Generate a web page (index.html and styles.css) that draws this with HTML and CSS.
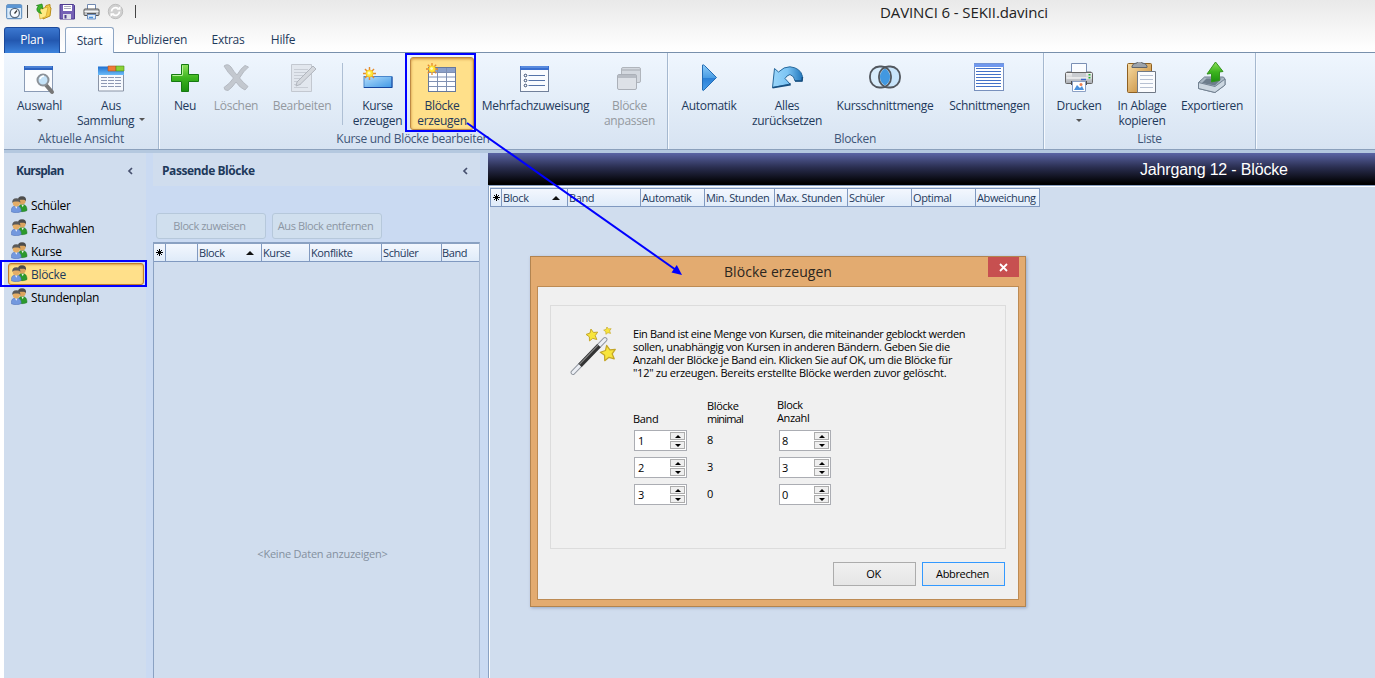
FILE: index.html
```html
<!DOCTYPE html>
<html lang="de">
<head>
<meta charset="utf-8">
<title>DAVINCI 6 - SEKII.davinci</title>
<link rel="stylesheet" href="styles.css">
</head>
<body>
<svg class="defs" width="0" height="0">
  <defs>
    <linearGradient id="gGreen" x1="0" y1="0" x2="0" y2="1"><stop offset="0" stop-color="#8fe05a"/><stop offset=".5" stop-color="#3cb41e"/><stop offset="1" stop-color="#1c9010"/></linearGradient>
    <linearGradient id="gBlue" x1="0" y1="0" x2="0" y2="1"><stop offset="0" stop-color="#8ccbf8"/><stop offset=".5" stop-color="#4a9de4"/><stop offset=".52" stop-color="#2a7fd6"/><stop offset="1" stop-color="#4aa0ea"/></linearGradient>
    <linearGradient id="gBar" x1="0" y1="0" x2="1" y2="1"><stop offset="0" stop-color="#b4defc"/><stop offset="1" stop-color="#3f98e6"/></linearGradient>
    <linearGradient id="gArc" x1="0" y1="0" x2="1" y2="0"><stop offset="0" stop-color="#9ad6fa"/><stop offset=".5" stop-color="#7cc4f4"/><stop offset="1" stop-color="#2277bc"/></linearGradient>
    <linearGradient id="gGrey" x1="0" y1="0" x2="0" y2="1"><stop offset="0" stop-color="#f4f4f4"/><stop offset="1" stop-color="#a8acb2"/></linearGradient>
    <linearGradient id="gClip" x1="0" y1="0" x2="1" y2="1"><stop offset="0" stop-color="#f8dca4"/><stop offset="1" stop-color="#bf812c"/></linearGradient>
    <linearGradient id="gTab" x1="0" y1="0" x2="0" y2="1"><stop offset="0" stop-color="#1e6fd0"/><stop offset="1" stop-color="#6cbcf8"/></linearGradient>
    <symbol id="spark" viewBox="0 0 12 12"><path d="M6 0v12M0 6h12M1.800 1.800l8.400 8.400M10.200 1.800l-8.400 8.400" stroke="#e58a2c" stroke-width="1.300"/><circle cx="6" cy="6" r="3.300" fill="#ffe83a" stroke="#f2bd1c" stroke-width=".6"/><circle cx="5.600" cy="5.600" r="1.400" fill="#fffcc0"/></symbol>
    <symbol id="people" viewBox="0 0 17 17">
      <path d="M7.500 15c0-5 1-6.500 3.500-6.500 3 0 5 1.500 5 6-2 1.300-5.700 1.600-8.500.5z" fill="#2c9a2c" stroke="#17701c" stroke-width=".5"/>
      <path d="M10.500 8.700l1.200 2.500 1.200-2.500z" fill="#e8f4e8"/>
      <circle cx="11" cy="4.800" r="3.700" fill="#dba45f"/>
      <path d="M7 5.300C6.500 2 8 .3 11 .3s4.500 1.700 4 5c-.6-1.500-1.500-1.500-4-1.500-2 0-3.300.3-4 1.500z" fill="#4c4c4c"/>
      <path d="M.4 15.800C.2 11.500 1.500 10 5 10s5.300 1.500 5.200 5.500c-2.500 1.500-7 1.500-9.800.3z" fill="#7398de" stroke="#496cb4" stroke-width=".5"/>
      <path d="M4 10.200l1.300 2.500 1.200-2.500z" fill="#eef2fb"/>
      <circle cx="5.300" cy="6.800" r="3.600" fill="#e4ad66"/>
      <path d="M1.300 7C.9 3.700 2.500 2.200 5.300 2.200s4.400 1.500 4 4.800c-.6-1.400-1.500-1.600-4-1.600-2.200 0-3.300.3-4 1.600z" fill="#5a5a5a"/>
    </symbol>
    <symbol id="star" viewBox="0 0 20 20"><path d="M8.500 1.500l3.600 4.900 6-.5-3.500 5 2.300 5.600-5.800-1.700-4.700 3.700-.2-6L1.500 9.200l5.700-2z" fill="#f8e53c" stroke="#c4a628" stroke-width="1.400" stroke-linejoin="round"/></symbol>
    <symbol id="mark" viewBox="0 0 9 9"><path d="M4.500 1v7M1 4.500h7M2 2l5 5M7 2L2 7" stroke="#000" stroke-width="1"/><circle cx="4.500" cy="4.500" r="1.500" fill="#000"/></symbol>
    <symbol id="printer" viewBox="0 0 34 34">
      <path d="M9.500 3.500h15v11h-15z" fill="#fafcff" stroke="#7a8fb4"/>
      <path d="M5 11.500h4.500V14h15v-2.500H29l2 3H3z" fill="#7b7b7b"/>
      <rect x="3.500" y="12.500" width="27" height="11" rx="1" fill="url(#gGrey)" stroke="#666"/>
      <path d="M10 13h14v4H10z" fill="#c9ccd0"/><path d="M4.500 18h25" stroke="#fff"/>
      <path d="M9 21h16v4H9z" fill="#4c4c4c"/>
      <path d="M10.500 21.500h13v10h-13z" fill="#fff" stroke="#8ba0c4"/><path d="M12 30l3-5 3 3 2-2 2 4z" fill="#4a90dc"/><circle cx="19" cy="24.500" r="1.500" fill="#f08050"/>
      <path d="M19 19.500h5" stroke="#3c66cc" stroke-width="1.500"/><path d="M27.500 14v1.500M27.500 17v1.500" stroke="#20b030" stroke-width="2"/>
    </symbol>
  </defs>
</svg>

<header class="titlebar">
  <div class="quick">
    <svg width="17" height="17" viewBox="0 0 17 17"><rect x=".7" y="1.700" width="15" height="14" rx="1" fill="#d9ebfb" stroke="#5083b8"/><path d="M1 2h14.500v3H1z" fill="#5c96d4"/><circle cx="8.800" cy="10" r="4.600" fill="#f7fbff" stroke="#5b6c80" stroke-width="1.300"/><path d="M8.500 10.500L11 7.500" stroke="#333" stroke-width="1.200"/></svg>
    <span class="bar"></span>
    <svg width="17" height="17" viewBox="0 0 17 17"><path d="M6 6l4-1 1-2.500 4-1V4l1 1-1 8-7 3z" fill="#f5cc48" stroke="#b98e1a"/><path d="M3.500 6.500L13 4l-2 9.500L5 16z" fill="#ffea84" stroke="#d2a52a" stroke-width=".7"/><path d="M6.500 10.500C1 9.500 1 5 3.500 3.500L1.500 2.500 7 1 8 6 6 4.800c-1.500 1.200-1.500 3.500.5 5.700z" fill="#3db52b" stroke="#1d7b16" stroke-width=".7"/></svg>
    <svg class="q3" width="17" height="17" viewBox="0 0 17 17"><path d="M1 1.500h13.500l1 1V16H1z" fill="#7561b5" stroke="#4f3d90"/><path d="M4 2h9v6H4z" fill="#fff"/><path d="M5 3.500h7M5 5.500h7" stroke="#aab"/><path d="M4 11h8v5H4z" fill="#dedee8"/><path d="M5.500 12h2v3.500h-2z" fill="#4f3d90"/></svg>
    <svg class="q4" width="17" height="17" viewBox="0 0 17 17"><path d="M4.500 1.500h8v5h-8z" fill="#fff" stroke="#7088b0"/><rect x="1" y="6" width="15" height="6.500" rx="1" fill="#c2c4c8" stroke="#555"/><path d="M1.500 8.500h14" stroke="#f4f4f4"/><path d="M4 11h9" stroke="#333" stroke-width="1.500"/><path d="M4.500 11.500h8v4.500h-8z" fill="#dceaf9" stroke="#6d8ec0"/><path d="M6 14.500h4" stroke="#4a90dc" stroke-width="1.500"/></svg>
    <svg class="q5" width="17" height="17" viewBox="0 0 17 17"><circle cx="8.500" cy="8.500" r="7.200" fill="#d0d0d0" stroke="#bdbdbd"/><path d="M4.500 8.500a4 4 0 016.500-3M12.500 8.500a4 4 0 01-6.500 3" fill="none" stroke="#fff" stroke-width="1.800"/><path d="M9.500 6.800h4V3zM7.500 10.200h-4V14z" fill="#fff"/></svg>
    <span class="bar last"></span>
  </div>
  <h1>DAVINCI 6 - SEKII.davinci</h1>
  <nav class="tabs">
    <a class="tab plan">Plan</a><a class="tab start">Start</a><a class="tab pub">Publizieren</a><a class="tab ext">Extras</a><a class="tab help">Hilfe</a>
  </nav>
</header>

<section class="ribbon">
  <div class="group g1">
    <div class="tools">
      <div class="tool w65"><svg width="34" height="34" viewBox="1 0 34 34"><rect x="2.500" y="4.500" width="28" height="25" fill="#fbfcfe" stroke="#8a9bb5"/><path d="M2 4h29v4H2z" fill="#2b62c0"/><path d="M3 5h27" stroke="#6ba0ec"/><path d="M24 23l6 7" stroke="#777" stroke-width="4" stroke-linecap="round"/><circle cx="21" cy="18" r="5.500" fill="#c4e2f8" stroke="#8c9299" stroke-width="2"/><path d="M18 17q1-3 4-3" fill="none" stroke="#fff" stroke-width="1.500"/></svg><span>Auswahl</span><i class="caret"></i></div>
      <div class="tool w78"><svg width="34" height="34" viewBox="0 0 34 34"><path d="M4.500 7h25v22h-25z" fill="#f6f9fd" stroke="#8a94a6"/><path d="M4 4.500h26V13H4z" fill="url(#gTab)"/><path d="M14 4h8v5h-8z" fill="#ee7b38" stroke="#b5501c" stroke-width=".6"/><path d="M22 4h8v5h-8z" fill="#8bd136" stroke="#4c8d1b" stroke-width=".6"/><path d="M7 15.500h20M7 18.500h20M7 21.500h20M7 24.500h20" stroke="#8c98b4" stroke-dasharray="6 1"/></svg><span>Aus</span><span>Sammlung <i class="caret inline"></i></span></div>
    </div>
    <div class="caption">Aktuelle Ansicht</div>
  </div>
  <div class="group g2">
    <div class="tools">
      <div class="tool w46"><svg width="34" height="34" viewBox="0 0 34 34"><path d="M13.500 2.500h7v10h10v7h-10v10h-7v-10h-10v-7h10z" fill="url(#gGreen)" stroke="#167a12"/><path d="M14.500 13V3.500M4.500 13.500h10" stroke="#b8f09a"/></svg><span>Neu</span></div>
      <div class="tool w56 off"><svg width="34" height="34" viewBox="0 0 34 34"><path d="M5 4q4-3 7 1 3 5 6 8 4-7 8-9.500l3.500 1.500q-5 4-9 11 4 5 8.500 8.500l-3 3.500q-5-2-9-8-4 6-8 8.500-4 0-4-3 6-4 9.500-9.500Q9 11 5 4z" fill="#c3c8cf" stroke="#b5bac2"/></svg><span>Löschen</span></div>
      <div class="tool w76 off"><svg width="34" height="34" viewBox="0 0 34 34"><path d="M6.500 2.500h20v27h-20z" fill="#e2e7ee" stroke="#c3c8d0"/><path d="M9 7.500h14M9 10.500h14M9 13.500h14M9 16.500h10M9 19.500h8M9 22.500h7M9 25.500h14" stroke="#c8cdd5"/><path d="M28 4l3 3-16 15.500-4 1.500 1-4z" fill="#d4d8de" stroke="#b0b5bd"/></svg><span>Bearbeiten</span></div>
      <span class="sep"></span>
      <div class="tool w63"><svg width="34" height="34" viewBox="0 0 34 34"><rect x="3" y="14.500" width="28" height="11" fill="url(#gBar)" stroke="#4b87cc"/><path d="M3 25.500h28V15" fill="none" stroke="#1546a0"/><use href="#spark" x="2" y="5" width="13" height="13"/></svg><span>Kurse</span><span>erzeugen</span></div>
      <div class="tool w66 active"><svg width="34" height="34" viewBox="0 0 34 34"><rect x="3.500" y="5.500" width="27" height="24" fill="#fdfeff" stroke="#66789b"/><path d="M4 6h26v4H4z" fill="#8ba0c8"/><path d="M4 10.500h26M4 15h26M4 19.500h26M4 24.500h26M12.500 6v23M21.500 6v23" stroke="#7f90b2"/><use href="#spark" x="1" y="1" width="12" height="12"/></svg><span>Blöcke</span><span>erzeugen</span></div>
      <div class="tool w121"><svg width="34" height="34" viewBox="1 0 34 34"><rect x="2.500" y="4.500" width="28" height="25" fill="#f9fbfe" stroke="#71809a"/><path d="M2 4h29v4H2z" fill="#3a6fd0"/><path d="M3 5h27" stroke="#77a7ee"/><path d="M10.500 13.500H27M10.500 18.500H27M10.500 23.500H27" stroke="#5573a8"/><g fill="#fff" stroke="#32466c"><circle cx="7.500" cy="13.500" r="1.300"/><circle cx="7.500" cy="18.500" r="1.300"/><circle cx="7.500" cy="23.500" r="1.300"/></g></svg><span>Mehrfachzuweisung</span></div>
      <div class="tool w67 off"><svg width="34" height="34" viewBox="0 0 34 34"><rect x="8.500" y="5.500" width="19" height="15" rx="1.500" fill="#d3d8df" stroke="#b0b5bc"/><path d="M9 8h18" stroke="#bcc1c8" stroke-width="2"/><rect x="4.500" y="12.500" width="19" height="15" rx="1.500" fill="#dde1e7" stroke="#abb0b8"/><path d="M5 14.500h18" stroke="#b7bcc4" stroke-width="3"/></svg><span>Blöcke</span><span>anpassen</span></div>
    </div>
    <div class="caption">Kurse und Blöcke bearbeiten</div>
  </div>
  <div class="group g3">
    <div class="tools">
      <div class="tool w78"><svg width="34" height="34" viewBox="0 0 34 34"><path d="M10.500 3q1-.5 2 .5L24.500 15.500 12 28q-1 1-1.500 0z" fill="url(#gBlue)" stroke="#236cb4"/></svg><span>Automatik</span></div>
      <div class="tool w78"><svg width="34" height="34" viewBox="0 0 34 34"><path d="M4.500 6.500l4 3.500Q14 4.500 20 4.800q10.500 1 12.500 9.700l-.5 4.500h-7q-.5-5-5-6.500-3.500 1-5 4l5 5.500L2.500 25.500z" fill="url(#gArc)" stroke="#28699c"/><path d="M2.500 25.800l17.500-3v-1.500M25 19h7l.5-4" fill="none" stroke="#174f80" stroke-width="1.500"/></svg><span>Alles</span><span>zurücksetzen</span></div>
      <div class="tool w118"><svg width="34" height="34" viewBox="0 0 34 34"><rect x="2" y="4.500" width="21" height="21" rx="9" fill="#d8ecfb"/><rect x="11" y="4.500" width="21" height="21" rx="9" fill="#c8e4fa"/><path d="M17 6.500q5 3.500 5 8.500t-5 8.500q-5-3.500-5-8.500t5-8.500z" fill="#4298e0"/><g fill="none" stroke="#52575e" stroke-width="1.800"><rect x="2" y="4.500" width="21" height="21" rx="9.500"/><rect x="11" y="4.500" width="21" height="21" rx="9.500"/></g></svg><span>Kursschnittmenge</span></div>
      <div class="tool w91"><svg width="34" height="34" viewBox="1 0 34 34"><rect x="2.500" y="1.500" width="29" height="27" fill="#fff" stroke="#7890bd"/><path d="M2 1.500h30V5H2z" fill="#6f98ee"/><path d="M4 6.500h25M4 9.500h25M4 12.500h25M4 15.500h25M4 18.500h25M4 21.500h25M4 24.500h25" stroke="#4472c8"/></svg><span>Schnittmengen</span></div>
    </div>
    <div class="caption">Blocken</div>
  </div>
  <div class="group g4">
    <div class="tools">
      <div class="tool w64"><svg width="34" height="34" viewBox="0 2 34 34"><use href="#printer" width="34" height="34"/></svg><span>Drucken</span><i class="caret"></i></div>
      <div class="tool w62"><svg width="34" height="34" viewBox="0 1 34 34"><rect x="2.500" y="2.500" width="24" height="29" rx="1" fill="url(#gClip)" stroke="#8e6022"/><path d="M7 5q1-3 5-3 0-2 2.500-2T17 2q4 0 5 3v1.500H7z" fill="#9da3aa" stroke="#5f656c"/><path d="M12.500 10.500h18v21h-18z" fill="#fbfcfe" stroke="#707986"/><path d="M15 14.500h13M15 18.500h13M15 22.500h13M15 26.500h13" stroke="#b6c0d2"/></svg><span>In Ablage</span><span>kopieren</span></div>
      <div class="tool w78"><svg width="34" height="34" viewBox="0 0 34 34"><path d="M3.500 20.500l6-5.500h19l1.500 2v6l-10 7.500-16.500-4z" fill="#a9b7c4" stroke="#6e7d8c"/><path d="M7 21l4.500-4.500h15l-6.500 7z" fill="#6d7d8c"/><path d="M3.500 20.500l16.500 4 10-7.500v6l-10 7.500-16.500-4z" fill="#ccd7e1" stroke="#738292"/><path d="M16.500 20V11.500l-4.500.5L20.500 0 28 9.500l-3.500.5v8.500q-4 .500-8 1.500z" fill="url(#gGreen)" stroke="#35931f"/></svg><span>Exportieren</span></div>
    </div>
    <div class="caption">Liste</div>
  </div>
</section>

<main class="work">
  <aside class="nav">
    <div class="phead"><span class="kp">Kursplan</span><svg width="6" height="8" viewBox="0 0 6 8"><path d="M5 1L2 4l3 3" fill="none" stroke="#46506e" stroke-width="1.700"/></svg></div>
    <ul>
      <li><svg width="17" height="17"><use href="#people"/></svg>Schüler</li>
      <li><svg width="17" height="17"><use href="#people"/></svg>Fachwahlen</li>
      <li><svg width="17" height="17"><use href="#people"/></svg>Kurse</li>
      <li class="sel"><svg width="17" height="17"><use href="#people"/></svg>Blöcke</li>
      <li><svg width="17" height="17"><use href="#people"/></svg>Stundenplan</li>
    </ul>
  </aside>

  <section class="match">
    <div class="phead">Passende Blöcke<svg width="6" height="8" viewBox="0 0 6 8"><path d="M5 1L2 4l3 3" fill="none" stroke="#46506e" stroke-width="1.700"/></svg></div>
    <div class="actions"><button disabled>Block zuweisen</button><button disabled>Aus Block entfernen</button></div>
    <div class="grid">
      <div class="cols left-cols"><span><svg width="9" height="9"><use href="#mark"/></svg></span><span></span><span>Block<i class="up"></i></span><span>Kurse</span><span>Konflikte</span><span>Schüler</span><span>Band</span></div>
      <div class="empty">&lt;Keine Daten anzuzeigen&gt;</div>
    </div>
  </section>

  <section class="blocks">
    <div class="banner">Jahrgang 12 - Blöcke</div>
    <div class="sheet">
      <div class="cols right-cols"><span><svg width="9" height="9"><use href="#mark"/></svg></span><span>Block<i class="up"></i></span><span>Band</span><span>Automatik</span><span>Min. Stunden</span><span>Max. Stunden</span><span>Schüler</span><span>Optimal</span><span>Abweichung</span></div>
    </div>
  </section>
</main>

<div class="dialog">
  <div class="dtitle">Blöcke erzeugen<span class="close"><svg width="9" height="9" viewBox="0 0 9 9"><path d="M1 1l7 7M8 1L1 8" stroke="#fff" stroke-width="1.800"/></svg></span></div>
  <div class="dbody">
    <div class="box">
      <svg class="wand" width="50" height="50" viewBox="0 0 50 50"><path d="M3 45.500L35 12.500" stroke="#8f959e" stroke-width="4.800" stroke-linecap="round"/><path d="M3 45.500L35 12.500" stroke="#eceff5" stroke-width="3" stroke-linecap="round"/><path d="M10 38.300L29 18.700" stroke="#333" stroke-width="4.800"/><path d="M9.500 37.300L28 18.200" stroke="#888" stroke-width="1.200"/><use href="#star" x="15" y="1" width="14" height="14"/><use href="#star" x="33" y="-1" width="9" height="9"/><use href="#star" x="29" y="17" width="18" height="18"/></svg>
      <div class="content">
        <p><span class="l1">Ein Band ist eine Menge von Kursen, die miteinander geblockt werden</span><br><span class="l2">sollen, unabhängig von Kursen in anderen Bändern. Geben Sie die</span><br><span class="l3">Anzahl der Blöcke je Band ein. Klicken Sie auf OK, um die Blöcke für</span><br><span class="l4">"12" zu erzeugen. Bereits erstellte Blöcke werden zuvor gelöscht.</span></p>
        <div class="form">
          <label>Band</label><label>Blöcke<br><span class="min">minimal</span></label><label class="raise">Block<br>Anzahl</label>
          <div class="spin">1<b><i></i><i></i></b></div><output>8</output><div class="spin s2">8<b><i></i><i></i></b></div>
          <div class="spin">2<b><i></i><i></i></b></div><output>3</output><div class="spin s2">3<b><i></i><i></i></b></div>
          <div class="spin">3<b><i></i><i></i></b></div><output>0</output><div class="spin s2">0<b><i></i><i></i></b></div>
        </div>
      </div>
    </div>
    <div class="dbuttons"><button>OK</button><button class="default">Abbrechen</button></div>
  </div>
</div>

<div class="frame f-ribbon"></div>
<div class="frame f-nav"></div>
<svg class="arrow" width="220" height="156" viewBox="0 0 220 156"><path d="M2 1L211 148" stroke="#00f" stroke-width="2"/><path d="M217 153l-10.500-2.500 5.300-7.500z" fill="#00f"/></svg>
</body>
</html>
```
FILE: styles.css
```css
* { box-sizing: border-box; }
body { margin: 0; width: 1375px; height: 678px; overflow: hidden; background: #fff; position: relative; display: flex; flex-direction: column; font: 12px/15px "Open Sans", "Noto Sans", sans-serif; color: #1e395b; }
.defs { position: absolute; }
svg { display: block; flex: none; }

/* Title bar and tabs */
.titlebar { height: 52px; flex: none; background: linear-gradient(#e9e9e9, #fdfdfd 46px, #fff); display: grid; grid-template: 26px 26px / 1fr auto; }
.quick { display: flex; align-items: center; padding-left: 6px; height: 22px; }
.bar { width: 1px; height: 13px; background: #444; margin: 0 7px 0 4px; }
.bar.last { margin-left: 11px; }
.q3 { margin-left: 7px; }
.q4 { margin-left: 7px; }
.q5 { margin-left: 7px; }
h1 { margin: 1px 328px 0 0; width: 167px; font-size: 15px; font-weight: 400; line-height: 22px; color: #222; white-space: nowrap; letter-spacing: -.1px; }
.tabs { grid-column: 1 / 3; display: flex; margin-left: 4px; align-items: flex-end; position: relative; top: 1px; white-space: nowrap; }
.tab { text-align: center; height: 26px; line-height: 26px; letter-spacing: -.25px; }
.plan { width: 56px; height: 26px; line-height: 23px; color: #fff; border: 1px solid #1c4a9c; border-bottom: 0; border-radius: 3px 3px 0 0; background: linear-gradient(#3c78d0, #2358b0 50%, #3c83dd); margin-right: 5px; }
.start { width: 49px; line-height: 25px; background: linear-gradient(#fff, #f0f6fe); border: 1px solid #8ea6c4; border-bottom: 0; border-radius: 3px 3px 0 0; }
.pub { width: 86px; letter-spacing: -.2px; }
.ext { width: 56px; }
.help { width: 54px; }

/* Ribbon */
.ribbon { height: 98px; flex: none; margin-left: 4px; border-top: 1px solid #7890ac; border-bottom: 1px solid #8ba0bc; background: linear-gradient(#eff6fe, #e3edf8 50%, #d7e3f2); display: flex; }
.group { display: flex; flex-direction: column; border-right: 1px solid #a5b8cf; box-shadow: 1px 0 #f5f9fe; }
.g1 { width: 155px; padding-left: 3px; }
.g2 { width: 509px; padding-left: 3px; }
.g3 { width: 376px; padding-left: 2px; }
.g4 { width: 212px; padding-left: 3px; }
.tools { display: flex; height: 79px; padding-top: 4px; }
.tool { display: flex; flex-direction: column; align-items: center; height: 73px; padding-top: 5px; white-space: nowrap; letter-spacing: -.3px; }
.tool svg { margin-bottom: 2px; }
.w46 { width: 46px; } .w56 { width: 56px; } .w62 { width: 62px; } .w63 { width: 63px; } .w64 { width: 64px; } .w65 { width: 65px; } .w66 { width: 66px; } .w67 { width: 67px; } .w76 { width: 76px; } .w78 { width: 78px; } .w91 { width: 91px; } .w118 { width: 118px; } .w121 { width: 121px; }
.off { color: #94999f; }
.active { border: 1px solid #bd8a45; border-radius: 3px; background: #ffe08a; padding-top: 4px; box-shadow: inset 0 1px 3px #cc8a38; width: 64px; margin: 0 1px; }
.sep { width: 1px; height: 62px; margin: 6px 3px 0 2px; background: #aebfd4; }
.caret { border: 3px solid transparent; border-top-color: #555; border-bottom: 0; margin-top: 6px; }
.caret.inline { display: inline-block; margin: 0 0 4px 2px; }
.caption { text-align: center; line-height: 14px; padding-right: 3px; color: #3e5578; letter-spacing: -.3px; }
.g1 .caption { letter-spacing: -.2px; }

/* Work area */
.work { flex: 1; margin-left: 4px; display: flex; background: #cadaf2; border-top: 3px solid #b4c8df; }
.phead { height: 33px; background: #d0ddee; font-weight: 700; display: flex; align-items: center; justify-content: space-between; padding: 2px 13px 0 12px; letter-spacing: -.45px; }
.kp { letter-spacing: -.75px; }
.nav { width: 142px; background: #d0ddee; margin-right: 7px; }
.nav ul { list-style: none; margin: 8px 0 0; padding: 0; color: #000; }
.nav li { display: flex; align-items: center; gap: 3px; height: 22px; margin: 0 2px 1px 4px; padding: 0 0 0 3px; width: 136px; letter-spacing: -.3px; }
.nav li svg { margin-top: -1px; }
.nav .sel { background: #ffe08a; border: 1px solid #c17d2d; border-radius: 3px; padding-left: 2px; color: #1e395b; box-shadow: inset 0 1px 2px #d9a04c; }
.match { width: 327px; display: flex; flex-direction: column; }
.match .phead { padding: 2px 12px 0 9px; }
.actions { display: flex; gap: 6px; padding: 27px 3px 3px; height: 56px; }
button { font: inherit; padding: 0; letter-spacing: inherit; }
.actions button { height: 26px; width: 110px; padding: 0 3px 2px 0; background: #d0dfee; border: 1px solid #b6c8db; border-radius: 3px; color: #8c96a3; font-size: 11px; white-space: nowrap; letter-spacing: -.4px; }
.grid { flex: 1; border-top: 2px solid #8aa1c2; border-left: 1px solid #8aa1c2; border-right: 1px solid #a9bad2; background: #d0ddee; display: flex; flex-direction: column; }
.cols { display: grid; height: 19px; border-bottom: 1px solid #8099c0; background: linear-gradient(#f3f7fe, #dfebf9); font-size: 11px; line-height: 17px; white-space: nowrap; letter-spacing: -.4px; }
.cols span { border-right: 1px solid #8099c0; padding-left: 1px; display: flex; align-items: center; justify-content: space-between; }
.left-cols { height: 18px; line-height: 16px; grid-template-columns: 12px 32px 64px 48px 72px 60px 37px; }
.left-cols span:last-child { border: 0; padding-left: 0; }
.up { border: 4px solid transparent; border-bottom-color: #111; border-top: 0; margin-right: 7px; }
.empty { flex: 1; display: flex; justify-content: center; padding: 284px 0 0 12px; color: #8490a0; font-size: 11px; letter-spacing: -.22px; }
.blocks { flex: 1; margin-left: 8px; display: flex; flex-direction: column; }
.banner { height: 32px; flex: none; background: linear-gradient(#5a64a4, #2a2e50 45%, #000 95%); color: #fff; font: 16px/33px "Liberation Sans", Arial, sans-serif; padding-left: 652px; letter-spacing: -.17px; }
.sheet { flex: 1; background: #d0ddee; border-left: 1px solid #8aa1c2; border-top: 1px solid #8aa1c2; padding: 2px 0 0 1px; box-shadow: inset 1px 1px #fff; }
.right-cols { width: 550px; height: 19px; border: 1px solid #8099c0; border-right: 0; grid-template-columns: 11px 66px 73px 64px 70px 73px 64px 64px 64px; }

/* Dialog */
.dialog { position: absolute; left: 530px; top: 256px; width: 496px; height: 351px; background: #e3ab70; border: 1px solid #b28450; padding: 0 6px 6px; display: flex; flex-direction: column; box-shadow: 1px 1px 3px #99a8c4; color: #000; font-size: 11px; letter-spacing: -.35px; }
.dtitle { height: 29px; flex: none; font-size: 14px; line-height: 29px; text-align: center; color: #2b2620; position: relative; letter-spacing: .05px; }
.close { position: absolute; right: 0; top: 0; width: 31px; height: 20px; background: #c75050; display: flex; align-items: center; justify-content: center; }
.dbody { flex: 1; background: #f0f0f0; border: 1px solid #bd8b54; padding: 18px 12px 0; }
.box { height: 244px; border: 1px solid #dcdcdc; display: flex; padding: 21px 0 0 19px; }
.content { margin-left: 13px; white-space: nowrap; }
p { margin: 0 0 20px; line-height: 13px; }
.l1 { letter-spacing: -.39px; }
.l2 { letter-spacing: -.35px; }
.l3 { letter-spacing: -.37px; }
.l4 { letter-spacing: -.27px; }
.min { letter-spacing: -.8px; }
.form { display: grid; grid-template-columns: 74px 71px 54px; grid-template-rows: 26px repeat(3, 27px); line-height: 13px; }
.form label { align-self: end; }
.form .raise { padding-bottom: 1px; margin-left: -1px; }
.form output { line-height: 21px; margin-top: 4px; }
.spin { width: 53px; height: 21px; margin: 5px 0 0 1px; background: #fff; border: 1px solid #abadb3; display: flex; justify-content: space-between; padding: 1px 1px 1px 3px; line-height: 17px; }
.s2 { width: 52px; padding-left: 2px; }
.spin b { width: 15px; display: grid; gap: 1px; }
.spin i { border: 1px solid #acacac; background: #efefef; display: flex; align-items: center; justify-content: center; }
.spin i::after { content: ""; border: 3px solid transparent; border-top: 0; border-bottom-color: #000; }
.spin i + i::after { border-top: 3px solid #000; border-bottom: 0; }
.dbuttons { display: flex; justify-content: flex-end; gap: 6px; padding: 13px 1px 0; }
.dbuttons button { width: 83px; height: 24px; padding: 0 2px 1px 0; border: 1px solid #acacac; background: linear-gradient(#f0f0f0, #e5e5e5); color: #000; }
.dbuttons .default { border-color: #3399ff; }

/* Callouts over the window */
.frame { position: absolute; border: 2px solid #00f; }
.f-ribbon { left: 405px; top: 53px; width: 71px; height: 79px; }
.f-nav { left: 0; top: 260px; width: 147px; height: 27px; }
.arrow { position: absolute; left: 465px; top: 122px; }
```
